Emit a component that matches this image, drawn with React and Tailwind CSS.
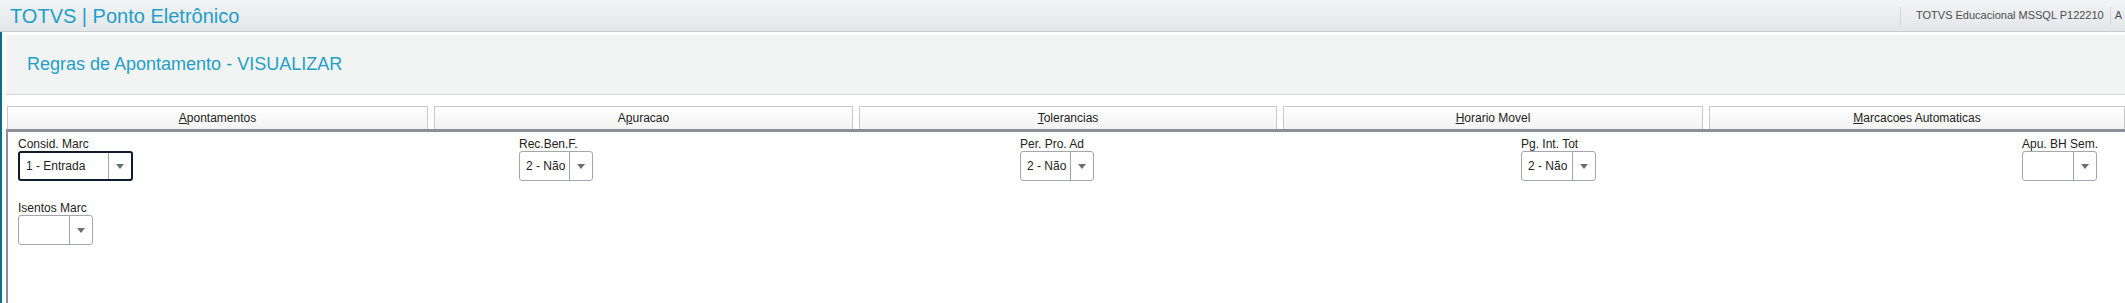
import React from "react";

function Tab({ width, children, last }) {
  return (
    <div
      className={`h-[23px] flex items-center justify-center border border-b-0 border-[#c9c9c9] bg-gradient-to-b from-white to-[#f3f3f3] text-[12px] text-[#222] ${
        last ? "flex-1" : "shrink-0"
      }`}
      style={width ? { width } : undefined}
    >
      {children}
    </div>
  );
}

function Select({ value, width, focused }) {
  return (
    <div
      className={`h-[30px] flex items-stretch rounded-[3px] bg-white ${
        focused ? "border-2 border-[#0d1b2a]" : "border border-[#a3a7ab]"
      }`}
      style={{ width }}
    >
      <div className="flex-1 flex items-center pl-[6px] text-[12px] text-[#222] whitespace-nowrap">
        {value}
      </div>
      <div className="w-[23px] flex items-center justify-center border-l border-[#a3a7ab]">
        <svg width="8" height="5" viewBox="0 0 8 5">
          <path d="M0 0 H8 L4 5 Z" fill="#6b6f76" />
        </svg>
      </div>
    </div>
  );
}

function Field({ label, value, width, focused }) {
  return (
    <div className="flex flex-col">
      <span className="h-[14px] leading-[14px] text-[12px] text-[#222] whitespace-nowrap">
        {label}
      </span>
      <Select value={value} width={width} focused={focused} />
    </div>
  );
}

export default function App() {
  return (
    <div className="h-[303px] w-[2125px] overflow-hidden bg-white font-['Liberation_Sans',Arial,sans-serif]">
      {/* top bar */}
      <header className="h-[32px] flex items-center border-b border-[#c9cdd0] bg-gradient-to-b from-[#f1f3f4] to-[#e4e7ea] overflow-hidden">
        <div className="w-[1900px] shrink-0 pl-[10px] text-[20px] leading-none text-[#1f9fc7]">
          TOTVS | Ponto Eletrônico
        </div>
        <div className="flex items-center shrink-0">
          <div className="h-[18px] border-l border-[#d4d7da]" />
          <span className="pl-[15px] pr-[6px] text-[11px] text-[#4d4d4d] whitespace-nowrap">
            TOTVS Educacional MSSQL P122210
          </span>
          <div className="h-[18px] border-l border-[#d4d7da]" />
          <span className="pl-[4px] text-[11px] text-[#4d4d4d] whitespace-nowrap">
            A
          </span>
        </div>
      </header>

      <div className="flex h-[271px]">
        <div className="w-[2px] bg-[#0c6d86]" />
        <div className="flex-1 pl-[4px] flex flex-col min-w-0">
          {/* page title */}
          <div className="mt-[3px] h-[60px] shrink-0 flex items-center pl-[21px] bg-[#f2f4f4] border-b border-[#d3d7d9] text-[18px] text-[#1f9fc7]">
            Regras de Apontamento - VISUALIZAR
          </div>

          {/* tabs */}
          <div className="mt-[11px] flex gap-[6px] pl-[1px] shrink-0">
            <Tab width={421}>
              <span>
                <u>A</u>pontamentos
              </span>
            </Tab>
            <Tab width={419}>
              <span>
                A<u>p</u>uracao
              </span>
            </Tab>
            <Tab width={418}>
              <span>
                <u>T</u>olerancias
              </span>
            </Tab>
            <Tab width={420}>
              <span>
                <u>H</u>orario Movel
              </span>
            </Tab>
            <Tab last>
              <span>
                <u>M</u>arcacoes Automaticas
              </span>
            </Tab>
          </div>

          {/* content */}
          <div className="flex-1 border-t-[3px] border-l-2 border-[#8b8f97] pl-[10px] pt-[5px]">
            <div className="grid grid-cols-[repeat(5,501px)] gap-y-[20px]">
              <Field label="Consid. Marc" value="1 - Entrada" width={115} focused />
              <Field label="Rec.Ben.F." value="2 - Não" width={74} />
              <Field label="Per. Pro. Ad" value="2 - Não" width={74} />
              <Field label="Pg. Int. Tot" value="2 - Não" width={75} />
              <Field label="Apu. BH Sem." value="" width={75} />
              <Field label="Isentos Marc" value="" width={75} />
            </div>
          </div>
        </div>
      </div>
    </div>
  );
}
